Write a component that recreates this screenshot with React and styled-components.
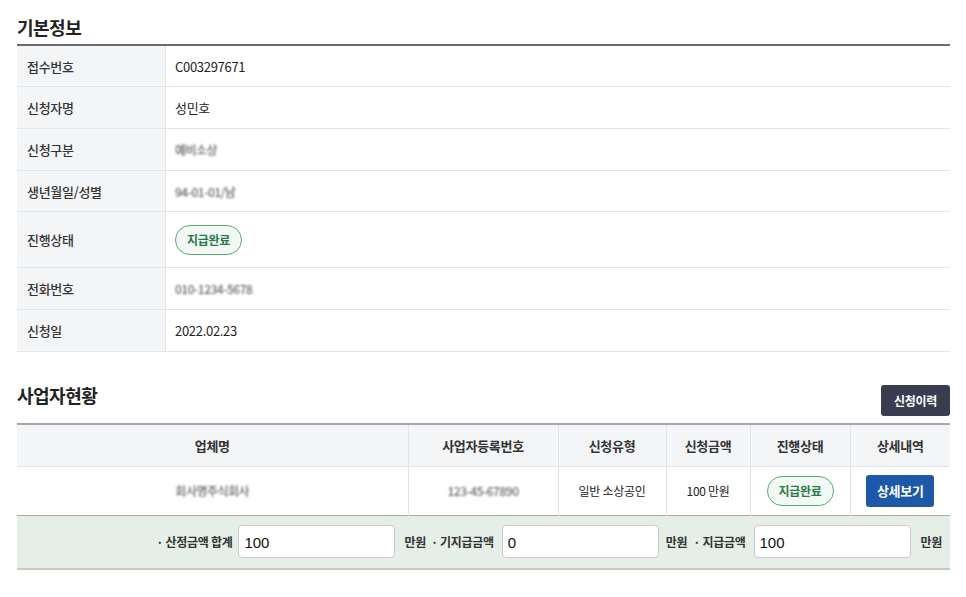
import React from "react";
import styled, { createGlobalStyle } from "styled-components";

const Global = createGlobalStyle`
  html, body { margin: 0; padding: 0; background: #fff; }
  body { font-family: "Noto Sans CJK KR", "Noto Sans", sans-serif; color: #222; }
  * { box-sizing: border-box; }
`;

const Page = styled.div`
  padding: 14px 16px 20px 17px;
  width: 966px;
`;

const Title = styled.h2`
  margin: 0;
  font-size: 18px;
  line-height: 26px;
  font-weight: 700;
  color: #222;
  letter-spacing: -0.5px;
`;

const InfoTable = styled.div`
  margin-top: 4px;
  border-top: 2px solid #676c75;
  display: grid;
  grid-template-columns: 149px 1fr;
`;

const Label = styled.div`
  background: #f4f5f7;
  border-right: 1px solid #e4e5e8;
  border-bottom: 1px solid #e4e5e8;
  height: ${(p) => p.$h}px;
  display: flex;
  align-items: center;
  padding-left: 10px;
  font-size: 13px;
  font-weight: 500;
  color: #333;
  letter-spacing: -0.3px;
`;

const Value = styled.div`
  border-bottom: 1px solid #e4e5e8;
  height: ${(p) => p.$h}px;
  display: flex;
  align-items: center;
  padding-left: 9px;
  font-size: 13px;
  color: #222;
  letter-spacing: -0.3px;
`;

const Blur = styled.span`
  filter: blur(1.3px);
  color: #666;
  font-size: 12px;
  font-weight: 500;
  letter-spacing: -0.5px;
  user-select: none;
`;

const Badge = styled.span`
  display: inline-flex;
  align-items: center;
  justify-content: center;
  width: 67px;
  height: 30px;
  border: 1px solid #5aa874;
  border-radius: 15px;
  background: #f2f9f4;
  color: #2a7a4a;
  font-size: 12px;
  font-weight: 700;
  letter-spacing: -0.3px;
`;

const SectionHead = styled.div`
  margin-top: 30px;
  display: flex;
  justify-content: space-between;
  align-items: flex-end;
  margin-bottom: 7px;
`;

const SectionTitle = styled(Title)`
  margin-bottom: 8px;
`;

const DarkButton = styled.button`
  width: 69px;
  height: 31px;
  border: none;
  border-radius: 3px;
  background: ${(p) => (p.$blue ? "#1e58a8" : "#383d4f")};
  color: #fff;
  font-family: inherit;
  font-size: 12px;
  font-weight: 700;
  letter-spacing: -0.3px;
  cursor: pointer;
  padding: 0;
`;

const BizTable = styled.table`
  width: 933px;
  border-collapse: collapse;
  border-top: 2px solid #a4a8ae;
  table-layout: fixed;
`;

const Th = styled.th`
  height: 42px;
  padding: 0;
  background: #f4f5f7;
  font-size: 13px;
  font-weight: 700;
  color: #333;
  border-bottom: 1px solid #e2e3e6;
  border-left: 1px solid #e2e3e6;
  letter-spacing: -0.3px;
  &:first-child { border-left: none; }
`;

const Td = styled.td`
  height: 49px;
  padding: 0;
  text-align: center;
  font-size: 12px;
  color: #222;
  border-left: 1px solid #e2e3e6;
  letter-spacing: -0.3px;
  &:first-child { border-left: none; }
`;

const SumCell = styled.td`
  height: 54px;
  background: #e5eee7;
  border-top: 1px solid #a8aca9;
  border-bottom: 2px solid #c6cac7;
  padding: 0 8px 0 0;
`;

const SumRow = styled.div`
  display: flex;
  justify-content: flex-end;
  align-items: center;
`;

const SumLabel = styled.span`
  font-size: 12px;
  font-weight: 700;
  color: #333;
  letter-spacing: -0.3px;
  margin: 0 ${(p) => p.$mr ?? 7}px 0 ${(p) => p.$ml ?? 0}px;
  white-space: nowrap;
`;

const Input = styled.input`
  width: 157px;
  height: 33px;
  border: 1px solid #c9cbcd;
  border-radius: 4px;
  background: #fff;
  padding: 2px 5px 0;
  font-family: "Liberation Sans", Arial, sans-serif;
  font-size: 15px;
  color: #111;
  outline: none;
`;

const info = [
  ["접수번호", "C003297671", 41],
  ["신청자명", "성민호", 42],
  ["신청구분", <Blur>예비소상</Blur>, 42],
  ["생년월일/성별", <Blur>94-01-01/남</Blur>, 41],
  ["진행상태", <Badge>지급완료</Badge>, 56],
  ["전화번호", <Blur>010-1234-5678</Blur>, 42],
  ["신청일", "2022.02.23", 42],
];

export default function App() {
  return (
    <Page>
      <Global />
      <Title>기본정보</Title>
      <InfoTable>
        {info.map(([l, v, h], i) => (
          <React.Fragment key={i}>
            <Label $h={h}>{l}</Label>
            <Value $h={h}>{v}</Value>
          </React.Fragment>
        ))}
      </InfoTable>

      <SectionHead>
        <SectionTitle>사업자현황</SectionTitle>
        <DarkButton>신청이력</DarkButton>
      </SectionHead>

      <BizTable>
        <colgroup>
          <col style={{ width: 391 }} />
          <col style={{ width: 150 }} />
          <col style={{ width: 108 }} />
          <col style={{ width: 84 }} />
          <col style={{ width: 100 }} />
          <col style={{ width: 100 }} />
        </colgroup>
        <thead>
          <tr>
            <Th>업체명</Th>
            <Th>사업자등록번호</Th>
            <Th>신청유형</Th>
            <Th>신청금액</Th>
            <Th>진행상태</Th>
            <Th>상세내역</Th>
          </tr>
        </thead>
        <tbody>
          <tr>
            <Td><Blur>회사명주식회사</Blur></Td>
            <Td><Blur>123-45-67890</Blur></Td>
            <Td>일반 소상공인</Td>
            <Td>100 만원</Td>
            <Td><Badge>지급완료</Badge></Td>
            <Td><DarkButton $blue style={{ height: 32, width: 68, fontSize: 13 }}>상세보기</DarkButton></Td>
          </tr>
          <tr>
            <SumCell colSpan={6}>
              <SumRow>
                <SumLabel $mr={6}>· 산정금액 합계</SumLabel>
                <Input defaultValue="100" />
                <SumLabel $ml={9} $mr={5}>만원</SumLabel>
                <SumLabel $mr={8}>· 기지급금액</SumLabel>
                <Input defaultValue="0" />
                <SumLabel $ml={7} $mr={6}>만원</SumLabel>
                <SumLabel $mr={8}>· 지급금액</SumLabel>
                <Input defaultValue="100" />
                <SumLabel $ml={10} $mr={0}>만원</SumLabel>
              </SumRow>
            </SumCell>
          </tr>
        </tbody>
      </BizTable>
    </Page>
  );
}
